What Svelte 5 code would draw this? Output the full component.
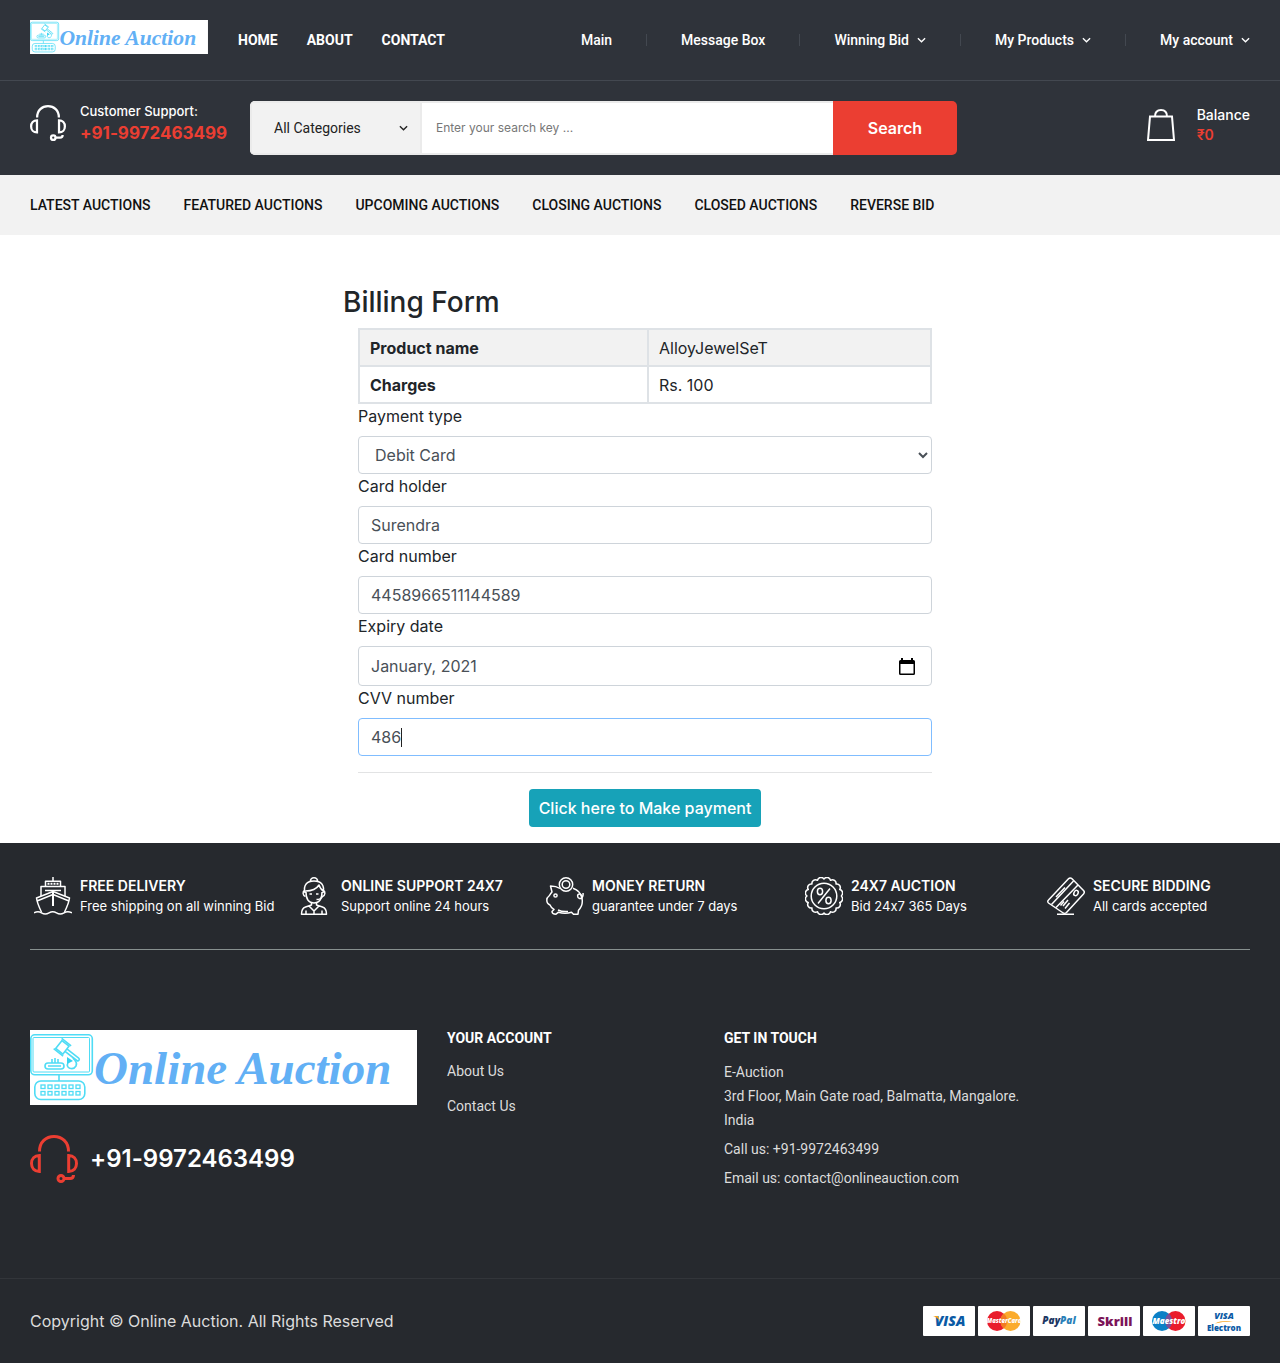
<script>
  const mainLinks = ['HOME', 'ABOUT', 'CONTACT'];
  const userLinks = [
    { label: 'Main', menu: false },
    { label: 'Message Box', menu: false },
    { label: 'Winning Bid', menu: true },
    { label: 'My Products', menu: true },
    { label: 'My account', menu: true }
  ];
  const auctionLinks = [
    'LATEST AUCTIONS',
    'FEATURED AUCTIONS',
    'UPCOMING AUCTIONS',
    'CLOSING AUCTIONS',
    'CLOSED AUCTIONS',
    'REVERSE BID'
  ];
  const features = [
    { icon: 'ship', title: 'FREE DELIVERY', text: 'Free shipping on all winning Bid' },
    { icon: 'agent', title: 'ONLINE SUPPORT 24X7', text: 'Support online 24 hours' },
    { icon: 'pig', title: 'MONEY RETURN', text: 'guarantee under 7 days' },
    { icon: 'percent', title: '24X7 AUCTION', text: 'Bid 24x7 365 Days' },
    { icon: 'card', title: 'SECURE BIDDING', text: 'All cards accepted' }
  ];
  const keyColumns = [0, 1, 2, 3, 4, 5];

  // Scalloped edge of the percent badge
  const scallops = 16;
  const point = (i, r) => {
    const a = (i / scallops) * Math.PI * 2;
    return `${(19 + r * Math.cos(a)).toFixed(2)} ${(19 + r * Math.sin(a)).toFixed(2)}`;
  };
  let badge = `M${point(0, 17)}`;
  for (let i = 1; i <= scallops; i++) badge += `A3.6 3.6 0 0 1 ${point(i, 17)}`;

  let payment = $state('Debit Card');
  let holder = $state('Surendra');
  let cardNumber = $state('4458966511144589');
  let expiry = $state('January, 2021');
  let cvv = $state('486');
</script>

{#snippet logo()}
  <svg class="logo" viewBox="0 0 387 75" role="img" aria-label="Online Auction">
    <rect width="387" height="75" fill="#fff" />
    <g fill="none" stroke="#4fdcf5" stroke-width="1.6">
      <rect x="0.8" y="4.8" width="61.5" height="40" rx="4" />
      <rect x="3" y="7.5" width="56.5" height="34.5" rx="1" stroke-width="1" />
      <path d="M29 45v6" />
      <rect x="4.8" y="51" width="50" height="18.5" rx="6" />
      <g transform="rotate(38 32 17)">
        <rect x="28" y="12" width="9" height="10" />
        <path d="M26.5 10.5h12M26.5 23.5h12M37 15.5h15a1.5 1.5 0 0 1 0 3H37" />
      </g>
      <rect x="15" y="33" width="19" height="6" rx="3" />
      <path d="M18 36h13M22 29v4M25 28v5M28 29v4M38 33c-3 5 5 8 8 3 2-4-1-5-3-8" />
      {#each keyColumns as k}
        <rect x={11 + k * 7} y="55" width="4" height="3.5" stroke-width="1.3" />
        <rect x={11 + k * 7} y="61.5" width="4" height="3.5" stroke-width="1.3" />
      {/each}
    </g>
    <path d="M37 27l6 4-6 3z" fill="#35d3f2" />
    <text x="64" y="54" class="wordmark">Online Auction</text>
  </svg>
{/snippet}

{#snippet headset()}
  <svg class="headset" viewBox="0 0 48 48" fill="none" stroke="currentColor" stroke-width="3" aria-hidden="true">
    <path d="M9.5 16.5C9.5 7 16 1.5 24 1.5S38.5 7 38.5 16.5" />
    <path d="M9.3 20.5v16C4.5 36.5 1.5 33 1.5 28.5s3-8 7.8-8zM38.7 20.5v16c4.8 0 7.8-3.5 7.8-8s-3-8-7.8-8z" />
    <circle cx="31" cy="43.5" r="3" />
    <path d="M34 43.5h6c2 0 3.5-1 3.5-3.5" />
  </svg>
{/snippet}

{#snippet chevron()}
  <svg class="chevron" viewBox="0 0 10 6" fill="none" stroke="currentColor" stroke-width="1.5" aria-hidden="true">
    <path d="M1 1l4 4 4-4" />
  </svg>
{/snippet}

{#snippet featureIcon(name)}
  <svg class="feature-icon" viewBox="0 0 38 38" fill="none" stroke="currentColor" stroke-width="1.5" stroke-linejoin="round" aria-hidden="true">
    {#if name === 'ship'}
      <path d="M19 0v4M11.5 9V4.2h15V9M7 19V9.5h24V19M11 13.5h16" />
      <path d="M13.5 6.8h11" stroke-dasharray="2 1" stroke-width="2" />
      <path d="M19 14.5L2.5 21c.7 5 2.5 9 5 14M19 14.5L35.5 21c-.7 5-2.5 9-5 14M3 24l16-6.5L35 24" />
      <path d="M19 13.5V29" stroke-width="2" />
      <path d="M0 35.8c3-1.5 5-1.5 7.5 0s5 1.5 7.5 0 5-1.5 7.5 0 5 1.5 7.5 0 5-1.5 8 0" />
    {:else if name === 'agent'}
      <path d="M15.5 4.5c-1-5 8-5 7 0M10 16C8 8 12 4 19 4s11 4 9 12M10.5 14c6 0 11-2 13.5-6 1 3 2.5 5 4.5 6M11 15c0 7 3 11 8 11s8-4 8-11" />
      <path d="M9.5 13.5c-2 1-2 5 1 6M28.5 13.5c2 1 2 5-1 6-1 2-3 3-6 3M14.5 17h2.5M21 17h2.5M16.5 25v3l-6 2c-3 1-4 3-4 7.2h25c0-4.200-1-6.200-4-7.200l-6-2v-3M14 29l5 5 5-5M19 34v3M11 33.5V37M27 33.5V37" />
    {:else if name === 'pig'}
      <path d="M14 11.5C11 9.5 8 9 4.5 9l1.5 6c-1.5 1.5-2 3-3 4-1.5 1-2.2 2-2.2 4 0 3 .7 4 3.2 5 1 2.5 3 4 4 4.5L6 34.5c0 2 1 2.7 4 2.7l2.5-2c4 1.2 9 1.2 13 0l2 2H32l.5-4c3-3 4.5-7 3.5-12-1-5-4.5-8.5-9-10" />
      <circle cx="20" cy="7.5" r="6.7" /><circle cx="20" cy="7.5" r="3.8" />
      <circle cx="9.5" cy="18.5" r="1.6" />
      <path d="M37 16c.5 3-1 6-3.5 5.5S31 17 33.5 17s3 4 1.500 5M12 33c3 1.500 6 1.800 10 1.500" />
    {:else if name === 'percent'}
      <path d={badge} />
      <circle cx="19" cy="19" r="12.8" />
      <path d="M25 11.5L13 26.5" />
      <ellipse cx="15" cy="14.5" rx="2.6" ry="3.2" /><ellipse cx="23.5" cy="23.5" rx="2.6" ry="3.2" />
    {:else}
      <path d="M1.5 23L21.5 1.8c1-1.1 2.4-1.1 3.5 0L36.5 13.5c1 1 1 2.2 0 3.4L19.5 35.5c-1 1-3 1-4 0L1.5 26c-1-.8-1-2 0-3z" />
      <path d="M4.5 27.5L26.5 4M9 30.5L31 8M10 37.2h17" />
      <path d="M9 20l9-9.5" />
      <path d="M17 24.5l-3.5 4M21 23l-5 6M22.5 26l-4.5 5.5" />
      <ellipse cx="29" cy="16" rx="2" ry="2.8" transform="rotate(30 29 16)" />
    {/if}
  </svg>
{/snippet}

<header>
  <div class="topbar">
    <a href="#home" class="brand">{@render logo()}</a>
    <nav class="main-nav" aria-label="Site">
      {#each mainLinks as item}<a href="#{item.toLowerCase()}">{item}</a>{/each}
    </nav>
    <ul class="user-nav">
      {#each userLinks as item}
        <li><a href="#user">{item.label}{#if item.menu}{@render chevron()}{/if}</a></li>
      {/each}
    </ul>
  </div>

  <div class="searchbar">
    <div class="support">
      {@render headset()}
      <div>
        <p>Customer Support:</p>
        <a href="tel:+919972463499">+91-9972463499</a>
      </div>
    </div>
    <form class="search" onsubmit={(e) => e.preventDefault()}>
      <div class="category">
        <select aria-label="Category"><option>All Categories</option></select>
        {@render chevron()}
      </div>
      <input type="text" aria-label="Search" placeholder="Enter your search key ..." />
      <button type="submit">Search</button>
    </form>
    <a href="#balance" class="balance">
      <svg class="bag" viewBox="0 0 28 32" fill="none" stroke="currentColor" stroke-width="2" aria-hidden="true">
        <path d="M3 7.5h22L27 31H1zM8 7.5C8 3 10.5 1 14 1s6 2 6 6.5" />
      </svg>
      <span>Balance<strong>₹0</strong></span>
    </a>
  </div>
</header>

<nav class="auction-nav" aria-label="Auctions">
  {#each auctionLinks as item}<a href="#auctions">{item}</a>{/each}
</nav>

<main>
  <h1>Billing Form</h1>
  <form class="billing" onsubmit={(e) => e.preventDefault()}>
    <table>
      <tbody>
        <tr><th scope="row">Product name</th><td>AlloyJewelSeT</td></tr>
        <tr><th scope="row">Charges</th><td>Rs. 100</td></tr>
      </tbody>
    </table>
    <label for="payment">Payment type</label>
    <select id="payment" class="control" bind:value={payment}>
      <option>Debit Card</option>
      <option>Credit Card</option>
    </select>
    <label for="holder">Card holder</label>
    <input id="holder" class="control" type="text" bind:value={holder} />
    <label for="number">Card number</label>
    <input id="number" class="control" type="text" bind:value={cardNumber} />
    <label for="expiry">Expiry date</label>
    <div class="control month">
      <input id="expiry" type="text" bind:value={expiry} />
      <button type="button" class="picker" aria-label="Choose month">
        <svg viewBox="0 0 16 17" aria-hidden="true">
          <path d="M2 0h2v2h8V0h2v2h.5A1.5 1.5 0 0 1 16 3.500v12a1.500 1.500 0 0 1-1.500 1.500h-13A1.500 1.500 0 0 1 0 15.500v-12A1.500 1.500 0 0 1 1.500 2H2zM1.500 6v9.500h13V6z" fill-rule="evenodd" />
        </svg>
      </button>
    </div>
    <label for="cvv">CVV number</label>
    <div class="control active">
      <input id="cvv" type="text" bind:value={cvv} /><span class="caret"></span>
    </div>
    <hr />
    <button type="submit" class="pay">Click here to Make payment</button>
  </form>
</main>

<footer>
  <ul class="features">
    {#each features as item}
      <li>
        {@render featureIcon(item.icon)}
        <div><h2>{item.title}</h2><p>{item.text}</p></div>
      </li>
    {/each}
  </ul>

  <div class="columns">
    <div>
      {@render logo()}
      <a href="tel:+919972463499" class="phone">{@render headset()}+91-9972463499</a>
    </div>
    <div>
      <h2>YOUR ACCOUNT</h2>
      <ul class="links">
        <li><a href="#about">About Us</a></li>
        <li><a href="#contact">Contact Us</a></li>
      </ul>
    </div>
    <address>
      <h2>GET IN TOUCH</h2>
      <p>E-Auction<br />3rd Floor, Main Gate road, Balmatta, Mangalore.<br />India</p>
      <p>Call us: +91-9972463499</p>
      <p>Email us: contact@onlineauction.com</p>
    </address>
  </div>

  <div class="bottom">
    <p>Copyright © Online Auction. All Rights Reserved</p>
    <div class="cards">
      <svg viewBox="0 0 52 30" role="img" aria-label="Visa">
        <rect width="52" height="30" rx="1" fill="#fff" />
        <text x="27" y="20" class="mark" font-size="14" fill="#0a5aa5">VISA</text>
        <path d="M10 10h5l2 5c-2-2.5-4-4-7-5z" fill="#f6a21d" />
      </svg>
      <svg viewBox="0 0 52 30" role="img" aria-label="MasterCard">
        <rect width="52" height="30" rx="1" fill="#fff" />
        <circle cx="19" cy="15" r="10" fill="#e91c2d" /><circle cx="32.5" cy="15" r="10" fill="#fbab2c" />
        <path d="M25.7 7.5a10 10 0 0 1 0 15 10 10 0 0 1 0-15z" fill="#f37a24" />
        <text x="26" y="17" class="mark" font-size="6" fill="#fff">MasterCard</text>
      </svg>
      <svg viewBox="0 0 52 30" role="img" aria-label="PayPal">
        <rect width="52" height="30" rx="1" fill="#fff" />
        <text x="26" y="18" class="mark" font-size="10" fill="#1d3763">Pay<tspan fill="#2a7fb8">Pal</tspan></text>
      </svg>
      <svg viewBox="0 0 52 30" role="img" aria-label="Skrill">
        <rect width="52" height="30" rx="1" fill="#fff" />
        <text x="27" y="20" class="mark upright" font-size="13" fill="#7b1458">Skrill</text>
      </svg>
      <svg viewBox="0 0 52 30" role="img" aria-label="Maestro">
        <rect width="52" height="30" rx="1" fill="#fff" />
        <circle cx="19" cy="15" r="10" fill="#0b80c6" /><circle cx="32.5" cy="15" r="10" fill="#ea1c2c" />
        <path d="M25.7 7.5a10 10 0 0 1 0 15 10 10 0 0 1 0-15z" fill="#77509a" />
        <text x="26" y="18" class="mark" font-size="8" fill="#fff">Maestro</text>
      </svg>
      <svg viewBox="0 0 52 30" role="img" aria-label="Visa Electron">
        <rect width="52" height="30" rx="1" fill="#fff" />
        <text x="26" y="13" class="mark" font-size="9" fill="#0a5aa5">VISA</text>
        <path d="M17 17.5c5-2.5 11-3 18-2-7-.2-12 .5-18 2z" fill="#f6a21d" />
        <text x="26" y="25" class="mark upright" font-size="8" fill="#0a5aa5">Electron</text>
      </svg>
    </div>
  </div>
</footer>

<style>
  :global(body) {
    margin: 0;
    background: #fff;
    color: #212529;
    font: 400 14px/24px Inter, 'Liberation Sans', sans-serif;
    font-variant-ligatures: no-contextual;
  }
  h1,
  h2,
  p,
  ul {
    margin: 0;
    padding: 0;
    list-style: none;
  }
  a {
    color: inherit;
    text-decoration: none;
  }
  * {
    box-sizing: border-box;
  }
  svg {
    display: block;
    flex: none;
  }
  button,
  input,
  select {
    font: inherit;
    color: inherit;
  }
  .logo {
    width: 100%;
    height: auto;
  }
  .wordmark {
    font: italic 700 47px 'Liberation Serif', serif;
    fill: #62b0f5;
  }
  .main-nav,
  .user-nav,
  .category,
  .auction-nav,
  .columns {
    font-family: Roboto, 'Liberation Sans', sans-serif;
  }

  header {
    background: #2f333a;
    color: #fff;
  }
  .topbar {
    display: flex;
    align-items: center;
    height: 81px;
    padding: 0 30px;
    border-bottom: 1px solid #434850;
  }
  .brand {
    width: 178px;
    margin: 0 30px 6px 0;
  }
  .main-nav {
    display: flex;
    gap: 29px;
    font-weight: 700;
  }
  .user-nav {
    display: flex;
    margin-left: auto;
    font-weight: 500;
  }
  .user-nav li {
    display: flex;
    align-items: center;
  }
  .user-nav li + li::before {
    content: '';
    height: 12px;
    margin: 0 34px;
    border-left: 1px solid #434850;
  }
  .user-nav a {
    display: flex;
    align-items: center;
    gap: 8px;
  }
  .chevron {
    width: 9px;
    height: 6px;
  }

  .searchbar {
    display: grid;
    grid-template-columns: 220px 707fr 293fr;
    align-items: start;
    padding: 20px 30px;
  }
  .support {
    display: flex;
    gap: 14px;
    align-items: center;
    font-size: 13px;
    line-height: 20px;
    font-weight: 500;
  }
  .support .headset {
    width: 36px;
  }
  .support a {
    display: block;
    color: #eb3e32;
    font-size: 17px;
    line-height: 24px;
    font-weight: 700;
  }
  .search {
    display: flex;
    height: 54px;
    border-radius: 5px;
    overflow: hidden;
    color: #222;
  }
  .category {
    position: relative;
    width: 172px;
    border: 2px solid #ebebeb;
    background: #f2f2f2;
  }
  .category select {
    appearance: none;
    width: 100%;
    height: 100%;
    padding: 0 22px;
    border: 0;
    background: none;
  }
  .category .chevron {
    position: absolute;
    right: 12px;
    top: 22px;
  }
  .search input {
    flex: 1;
    min-width: 0;
    padding: 0 14px;
    border: solid #ebebeb;
    border-width: 2px 0;
    background: #fff;
    font-size: 12px;
  }
  .search input::placeholder {
    color: #777;
  }
  .search button {
    width: 124px;
    border: 0;
    background: #eb3e32;
    color: #fff;
    font-size: 16px;
    font-weight: 600;
  }
  .balance {
    display: flex;
    align-items: center;
    justify-content: flex-end;
    gap: 22px;
    padding-top: 4px;
    font-weight: 500;
    line-height: 20px;
  }
  .bag {
    width: 28px;
  }
  .balance strong {
    display: block;
    color: #eb3e32;
    font-weight: 600;
  }

  .auction-nav {
    display: flex;
    align-items: center;
    gap: 33px;
    height: 60px;
    padding: 0 30px;
    background: #f2f2f2;
    color: #111;
    font-weight: 500;
  }

  main {
    width: 614px;
    max-width: 100%;
    margin: 0 auto;
    padding: 50px 0 16px 10px;
  }
  h1 {
    font-size: 28px;
    line-height: 34px;
    font-weight: 500;
  }
  .billing {
    padding: 9px 15px 0;
    font-size: 16px;
  }
  table {
    width: 100%;
    border-collapse: collapse;
  }
  tr:first-child {
    background: #f2f2f2;
  }
  th,
  td {
    height: 37px;
    padding: 0 10px;
    border: 2px solid #dee2e6;
    text-align: left;
  }
  th {
    width: 289px;
  }
  label {
    display: block;
    margin-bottom: 8px;
  }
  .control {
    display: block;
    width: 100%;
    height: 38px;
    padding: 6px 12px;
    border: 1px solid #ced4da;
    border-radius: 4px;
    background: #fff;
    color: #495057;
  }
  .control input {
    padding: 0;
    border: 0;
    outline: 0;
    background: none;
  }
  .month {
    display: flex;
    align-items: center;
    height: 40px;
  }
  .month input {
    flex: 1;
    min-width: 0;
  }
  .picker {
    padding: 0 4px;
    border: 0;
    background: none;
  }
  .picker svg {
    width: 16px;
    height: 17px;
    fill: #000;
  }
  .active {
    display: flex;
    align-items: center;
    border-color: #80bdff;
  }
  .active input {
    field-sizing: content;
  }
  .caret {
    height: 19px;
    border-left: 1px solid #222;
  }
  hr {
    margin: 16px 0;
    border: 0;
    border-top: 1px solid #e2e3e4;
  }
  .pay {
    display: block;
    height: 38px;
    margin: 0 auto;
    padding: 0 10px;
    border: 0;
    border-radius: 4px;
    background: #17a2b8;
    color: #fff;
    font-weight: 500;
  }

  footer {
    background: #26292e;
    color: #fff;
  }
  footer h2 {
    font-size: 14px;
    font-weight: 600;
  }
  .features {
    display: grid;
    grid-template-columns: 261fr 251fr 259fr 242fr 203fr;
    margin: 0 30px;
    padding: 32px 0 32px 4px;
    border-bottom: 1px solid #87908f;
  }
  .features li {
    display: flex;
    align-items: center;
    gap: 8px;
    font-size: 13px;
    white-space: nowrap;
  }
  .features h2,
  .features p {
    line-height: 21px;
  }
  .feature-icon {
    width: 38px;
  }
  .columns {
    display: grid;
    grid-template-columns: 387fr 247fr 526fr;
    gap: 30px;
    padding: 80px 30px 83px;
    color: #dcdcdc;
  }
  .phone {
    display: flex;
    align-items: center;
    gap: 12px;
    margin-top: 30px;
    color: #fff;
    font-family: Inter, 'Liberation Sans', sans-serif;
    font-size: 24px;
    font-weight: 600;
  }
  .phone .headset {
    width: 48px;
    color: #eb3e32;
  }
  .columns h2 {
    line-height: 16px;
    font-weight: 700;
    color: #fff;
  }
  .links {
    padding-top: 8px;
    line-height: 35px;
  }
  address {
    font-style: normal;
  }
  address p {
    margin-bottom: 5px;
  }
  address h2 {
    margin-bottom: 14px;
  }
  .bottom {
    display: flex;
    align-items: center;
    justify-content: space-between;
    height: 85px;
    padding: 0 30px;
    border-top: 1px solid #32353a;
    color: #dcdcdc;
    font-size: 16px;
  }
  .cards {
    display: flex;
    gap: 3px;
  }
  .cards svg {
    width: 52px;
    height: 30px;
  }
  .mark {
    font-family: 'Open Sans', sans-serif;
    font-style: italic;
    font-weight: 800;
    text-anchor: middle;
  }
  .upright {
    font-style: normal;
  }
</style>
